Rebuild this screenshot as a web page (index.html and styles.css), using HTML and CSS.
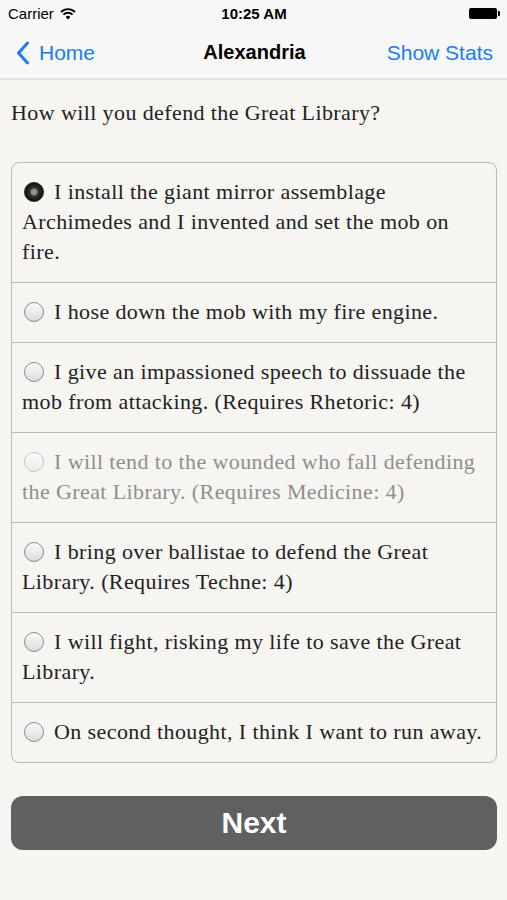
FILE: index.html
```html
<!DOCTYPE html>
<html>
<head>
<meta charset="utf-8">
<title>Alexandria</title>
<link rel="stylesheet" href="styles.css">
</head>
<body>
<div class="top">
	<div class="status">
		<div class="carrier">Carrier
			<svg class="wifi" width="16" height="12" viewBox="0 0 16 12">
				<path d="M8 11.5 L5.6 8.9 A3.6 3.6 0 0 1 10.4 8.9 Z" fill="#000"/>
				<path d="M3.4 6.6 A6.6 6.6 0 0 1 12.6 6.6" stroke="#000" stroke-width="1.8" fill="none"/>
				<path d="M1 4 A10 10 0 0 1 15 4" stroke="#000" stroke-width="1.8" fill="none"/>
			</svg>
		</div>
		<div class="time">10:25 AM</div>
		<div class="battery"><span></span></div>
	</div>
	<div class="nav">
		<a class="back">
			<svg width="14" height="24" viewBox="0 0 14 24"><path d="M11.5 2 L2.5 12 L11.5 22" stroke="#1a7cf4" stroke-width="3" fill="none" stroke-linecap="round" stroke-linejoin="round"/></svg>
			Home
		</a>
		<div class="title">Alexandria</div>
		<a class="stats">Show Stats</a>
	</div>
</div>

<div class="page">
	<p class="question">How will you defend the Great Library?</p>
	<ul class="choices">
		<li class="on"><i></i>I install the giant mirror assemblage Archimedes and I invented and set the mob on fire.</li>
		<li><i></i>I hose down the mob with my fire engine.</li>
		<li><i></i>I give an impassioned speech to dissuade the mob from attacking. (Requires Rhetoric: 4)</li>
		<li class="off"><i></i>I will tend to the wounded who fall defending the Great Library. (Requires Medicine: 4)</li>
		<li><i></i>I bring over ballistae to defend the Great Library. (Requires Techne: 4)</li>
		<li><i></i>I will fight, risking my life to save the Great Library.</li>
		<li><i></i>On second thought, I think I want to run away.</li>
	</ul>
	<div class="next">Next</div>
</div>
</body>
</html>
```

FILE: styles.css
```css
*{margin:0;padding:0;list-style:none;box-sizing:border-box;}
body{background:#f7f5f2;width:507px;height:900px;overflow:hidden;}
.top{background:#f7f7f7;border-bottom:2px solid #e4e2df;font-family:"Liberation Sans",Arial,sans-serif;}
.status{height:27px;display:flex;align-items:center;justify-content:space-between;padding:0 7px 0 8px;font-size:15px;color:#000;}
.carrier{display:flex;align-items:center;gap:6px;width:120px;}
.time{font-weight:bold;font-size:15px;}
.battery{width:120px;display:flex;justify-content:flex-end;align-items:center;}
.battery span{display:block;width:28px;height:11px;background:#000;border-radius:2px;position:relative;margin-right:3px;}
.battery span:after{content:"";position:absolute;right:-3px;top:3px;width:2px;height:5px;background:#000;border-radius:0 1px 1px 0;}
.nav{height:51px;display:flex;align-items:center;justify-content:space-between;padding:0 14px 0 16px;font-size:21px;}
.back{color:#1a7cf4;display:flex;align-items:center;gap:9px;width:150px;}
.title{font-weight:bold;color:#000;font-size:20px;}
.stats{color:#1a7cf4;width:150px;text-align:right;}
.page{padding:0 10px 0 11px;font-family:"Liberation Serif","Times New Roman",serif;color:#222;}
.question{font-size:22px;padding:19px 0 0;line-height:28px;height:71px;letter-spacing:0.4px;}
.choices{margin-top:11px;border:1px solid #bbb;border-radius:8px;background:#f7f5f2;}
.choices li{font-size:22px;line-height:30px;padding:14px 8px 15px 10px;border-top:1px solid #bbb;letter-spacing:0.4px;}
.choices li:first-child{border-top:0;}
.choices li i{display:inline-block;width:20px;height:20px;border-radius:50%;border:1px solid #8a8a8a;background:linear-gradient(#fafafa,#dcdcdc);vertical-align:-3px;margin:0 10px 0 2px;}
.choices li.on i{background:radial-gradient(circle,#999 0,#888 3px,#333 4px,#111 9px);border-color:#222;}
.choices li.off{color:#8e8e8e;}
.choices li.off i{border-color:#c4c4c4;background:linear-gradient(#fbfbfb,#ececec);}
.next{margin-top:33px;height:54px;border-radius:12px;background:#606060;color:#fff;text-align:center;line-height:54px;font-family:"Liberation Sans",Arial,sans-serif;font-size:30px;font-weight:bold;}
```
